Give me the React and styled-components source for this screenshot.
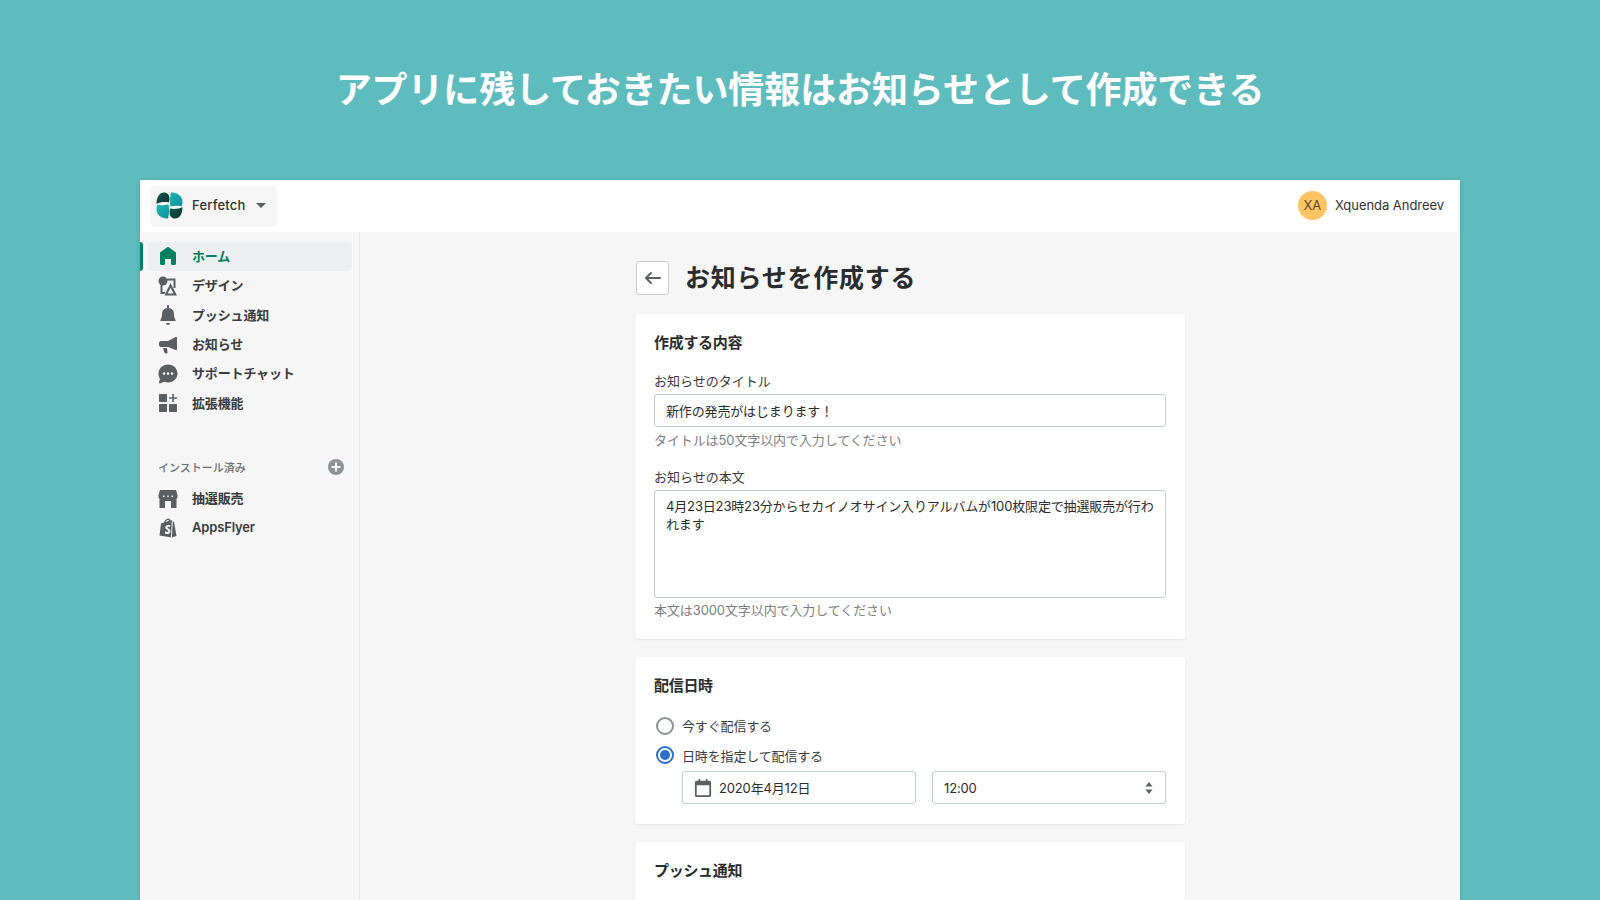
import React from 'react'
import styled, { createGlobalStyle } from 'styled-components'

const FONT = `Inter, "Noto Sans CJK JP", "Noto Sans", sans-serif`

const GlobalStyle = createGlobalStyle`
  html, body { margin: 0; height: 100%; }
  body {
    background: #5fbcbe;
    font-family: ${FONT};
    overflow: hidden;
    color: #202223;
  }
  * { box-sizing: border-box; }
`

const Page = styled.div`
  width: 1600px;
  height: 900px;
  display: flex;
  flex-direction: column;
  overflow: hidden;
`

const Banner = styled.h1`
  margin: 0;
  height: 180px;
  flex: none;
  padding-bottom: 6px;
  display: flex;
  align-items: center;
  justify-content: center;
  color: #fff;
  font-size: 36px;
  font-weight: 700;
  letter-spacing: -0.1px;
`

const Window = styled.div`
  flex: 1;
  min-height: 0;
  margin: 0 140px;
  display: flex;
  flex-direction: column;
  background: #f6f6f6;
  box-shadow: 0 0 6px rgba(0, 0, 0, 0.12);
`

const TopBar = styled.header`
  height: 52px;
  flex: none;
  background: #fff;
  display: flex;
  align-items: center;
  justify-content: space-between;
  padding: 0 16px 0 11px;
`

const Brand = styled.div`
  width: 126px;
  height: 41px;
  border-radius: 4px;
  background: #f6f6f7;
  display: flex;
  align-items: center;
  padding: 0 0 2px 5px;
  font-size: 13px;
  font-weight: 500;
  letter-spacing: 0.2px;
  color: #333;
`

const BrandName = styled.span`
  margin: 0 10px 0 9px;
`

const Caret = styled.span`
  width: 0;
  height: 0;
  border-left: 5px solid transparent;
  border-right: 5px solid transparent;
  border-top: 5px solid #5c5f62;
`

const User = styled.div`
  display: flex;
  align-items: center;
  gap: 8px;
  margin-bottom: 2px;
  font-size: 13px;
  letter-spacing: -0.05px;
  color: #333;
`

const Avatar = styled.div`
  width: 29px;
  height: 29px;
  border-radius: 50%;
  background: #ffc565;
  display: flex;
  align-items: center;
  justify-content: center;
  font-size: 13px;
  color: #5c4a26;
`

const Body = styled.div`
  flex: 1;
  min-height: 0;
  display: flex;
`

const Sidebar = styled.nav`
  width: 220px;
  flex: none;
  border-right: 1px solid #e6e6e6;
  padding-top: 9.7px;
`

const NavItem = styled.div`
  position: relative;
  height: 29.4px;
  margin: 0 7px 0 8px;
  padding-left: 10px;
  display: flex;
  align-items: center;
  gap: 14px;
  border-radius: 3px;
  font-size: 13px;
  font-weight: 600;
  letter-spacing: -0.15px;
  color: ${p => (p.$active ? '#008060' : '#3a3c3e')};
  background: ${p => (p.$active ? '#edeeef' : 'transparent')};
  svg { flex: none; fill: ${p => (p.$active ? '#008060' : '#5c5f62')}; }
  ${p =>
    p.$active &&
    `&::before {
      content: '';
      position: absolute;
      left: -8px;
      top: 0;
      bottom: 0;
      width: 3px;
      border-radius: 0 3px 3px 0;
      background: #008060;
    }`}
`

const NavLabel = styled.span`
  margin-bottom: 2px;
`

const SectionHead = styled.div`
  margin: 37px 15px 5px 18px;
  height: 24px;
  display: flex;
  align-items: center;
  justify-content: space-between;
  font-size: 11px;
  font-weight: 500;
  color: #6d7175;
`

const Main = styled.main`
  flex: 1;
  min-width: 0;
  display: flex;
  justify-content: center;
  overflow: hidden;
`

const Column = styled.div`
  width: 550px;
  padding-top: 29px;
  flex: none;
`

const TitleRow = styled.div`
  display: flex;
  align-items: center;
  gap: 16px;
  margin: 0 0 19px 1px;
`

const BackButton = styled.button`
  width: 33px;
  height: 34px;
  padding: 0;
  display: flex;
  align-items: center;
  justify-content: center;
  background: #fff;
  border: 1px solid #c9cccf;
  border-radius: 3px;
  svg { fill: #5c5f62; }
`

const PageTitle = styled.h2`
  margin: 1px 0 0;
  font-size: 25px;
  line-height: 31px;
  font-weight: 700;
  letter-spacing: 0.75px;
  color: #2b2c2d;
`

const Card = styled.section`
  background: #fff;
  border-radius: 3px;
  box-shadow: 0 1px 2px rgba(0, 0, 0, 0.07);
  padding: 18px 18px 20px 19px;
  margin-bottom: 18px;
`

const CardTitle = styled.h3`
  margin: 0 0 18px;
  font-size: 15px;
  font-weight: 700;
  line-height: 22px;
  letter-spacing: -0.3px;
  color: #2b2c2d;
`

const Label = styled.div`
  font-size: 13px;
  line-height: 18px;
  margin-bottom: 4px;
  color: #3a3c3e;
`

const inputBase = `
  display: block;
  border: 1px solid #c4cdd5;
  border-radius: 3px;
  background: #fff;
  font-family: ${FONT};
  font-size: 13px;
  letter-spacing: -0.15px;
  color: #2b2c2d;
  outline: none;
`

const TextInput = styled.input`
  ${inputBase}
  width: 512px;
  height: 33px;
  padding: 0 11px;
`

const TextArea = styled.textarea`
  ${inputBase}
  width: 512px;
  height: 108px;
  padding: 6px 11px;
  line-height: 18.4px;
  resize: none;
`

const Help = styled.div`
  font-size: 13px;
  line-height: 18px;
  letter-spacing: -0.1px;
  margin: ${p => (p.$last ? '3px 0 0' : '4px 0 19px')};
  color: #7b7f83;
`

const RadioGroup = styled.div`
  margin-top: -4px;
`

const RadioRow = styled.label`
  height: 29.5px;
  display: flex;
  align-items: center;
  gap: 8px;
  margin-left: 2px;
  font-size: 13px;
  letter-spacing: -0.15px;
  color: #3a3c3e;
`

const RadioDot = styled.span`
  width: 18px;
  height: 18px;
  border-radius: 50%;
  background: #fff;
  border: 2px solid ${p => (p.$checked ? '#2c6ecb' : '#8c9196')};
  display: flex;
  align-items: center;
  justify-content: center;
  ${p =>
    p.$checked &&
    `&::after {
      content: '';
      width: 10px;
      height: 10px;
      border-radius: 50%;
      background: #2c6ecb;
    }`}
`

const PickerRow = styled.div`
  display: flex;
  gap: 16px;
  margin: 1px 0 0 28px;
`

const Picker = styled.div`
  ${inputBase}
  width: 234px;
  height: 33px;
  padding: 0 10px 0 11px;
  display: flex;
  align-items: center;
  gap: 7px;
  svg { flex: none; fill: #5c5f62; }
`

const PickerValue = styled.span`
  flex: 1;
`

const Home = () => (
  <svg width="20" height="20" viewBox="0 0 20 20"><path d="M18 7.261V17.5c0 .841-.672 1.5-1.5 1.5h-2c-.828 0-1.5-.659-1.5-1.5V13H7v4.477C7 18.318 6.328 19 5.5 19h-2c-.828 0-1.5-.682-1.5-1.523V7.261a1.5 1.5 0 0 1 .615-1.21l6.59-4.82a1.481 1.481 0 0 1 1.59 0l6.59 4.82A1.5 1.5 0 0 1 18 7.26z" /></svg>
)

const Design = () => (
  <svg width="20" height="20" viewBox="0 0 20 20">
    <circle cx="5" cy="5" r="4.5" />
    <path d="M2.500 9h2v7h3l-1 2H2.500V9zM9 2.500h8.500V12h-2V4.500H9v-2z" />
    <path fillRule="evenodd" d="M12.500 7 19 19.500H6.500L12.500 7zm0 4.800-2.800 5.700h5.800l-3-5.700z" />
  </svg>
)

const Bell = () => (
  <svg width="20" height="20" viewBox="0 0 20 20"><path d="M10 0a1 1 0 0 1 1 1v2.032l-.001.021-.002.03A6.002 6.002 0 0 1 16 9c0 3.093.625 4.312 1.599 6.21l.034.068c.17.33-.07.722-.442.722H2.809a.496.496 0 0 1-.442-.722l.034-.068C3.375 13.312 4 12.093 4 9a6.002 6.002 0 0 1 5.003-5.918l-.002-.04L9 3V1a1 1 0 0 1 1-1zM12 18a2 2 0 0 1-4 0h4z" /></svg>
)

const Megaphone = () => (
  <svg width="20" height="20" viewBox="0 0 20 20">
    <path d="M19 2v13h-1.500L10 12H3a2 2 0 0 1-2-2V8a2 2 0 0 1 2-2h7l7.500-4H19z" />
    <path d="M5 13h4l.5 4.500c0 .5-.5 1-1 1H7.500c-.5 0-.8-.3-1-.8L5 13z" />
  </svg>
)

const Chat = () => (
  <svg width="20" height="20" viewBox="0 0 20 20">
    <path fillRule="evenodd" d="M10 0.500c5.200 0 9.500 3.900 9.500 9s-4.300 9-9.500 9c-1.300 0-2.600-.3-3.800-.8L2 19.500c-.6.200-1.100-.3-1-.9l.9-3.900C1 13.200.5 11.400.5 9.500c0-5.100 4.300-9 9.500-9zM6 8.300a1.300 1.300 0 1 0 0 2.600 1.300 1.300 0 0 0 0-2.600zm4 0a1.300 1.300 0 1 0 0 2.600 1.300 1.300 0 0 0 0-2.600zm4 0a1.300 1.300 0 1 0 0 2.600 1.300 1.300 0 0 0 0-2.600z" />
  </svg>
)

const Apps = () => (
  <svg width="20" height="20" viewBox="0 0 20 20">
    <path d="M2 1h6c.6 0 1 .4 1 1v6c0 .6-.4 1-1 1H2c-.6 0-1-.4-1-1V2c0-.6.4-1 1-1zM2 11h6c.6 0 1 .4 1 1v6c0 .6-.4 1-1 1H2c-.6 0-1-.4-1-1v-6c0-.6.4-1 1-1zM12 11h6c.6 0 1 .4 1 1v6c0 .6-.4 1-1 1h-6c-.6 0-1-.4-1-1v-6c0-.6.4-1 1-1zM14.200 1h1.600v3.200H19v1.600h-3.200V9h-1.600V5.800H11V4.200h3.200V1z" />
  </svg>
)

const Store = () => (
  <svg width="20" height="20" viewBox="0 0 20 20">
    <path d="M2 1h16l1.500 5v2c0 .8-.5 1.500-1 1.800V19h-5.500v-7H7v7H1.500V9.800C1 9.500.5 8.800.5 8V6L2 1z" />
    <path d="M5 6.500h1.500v1.500H5zM9.250 6.500h1.500v1.500h-1.500zM13.500 6.500H15v1.500h-1.500z" fill="#f6f6f6" />
  </svg>
)

const Bag = () => (
  <svg width="20" height="20" viewBox="0 0 20 20">
    <path fillRule="evenodd" d="M10.500.500c1 0 1.700.9 2 2l1.200-.3.800 1.300 1.500.2L18.500 18l-5 1.500L1.500 17.500 3 5.500l3-1C6.500 2.500 8.500.500 10.500.500zM10.800 7c-2-.3-3.500 1-3.500 2.600 0 2 3 2.300 3 3.400 0 .6-.6.900-1.100.9-.9 0-1.900-.6-1.900-.6l-.5 1.900s1 .8 2.400.8c1.700 0 3.200-1.200 3.200-3.100 0-2.300-3-2.600-3-3.500 0-.4.400-.7 1-.7.600 0 1.400.3 1.400.3l.5-1.700s-.6-.3-1.500-.3zM10.300 1.700C9 1.800 8 3 7.600 4.100l3.300-1c-.1-.6-.3-1.400-.6-1.400z" />
    <path d="M14.300 3.500 13.400 19.500" stroke="#f6f6f6" strokeWidth="1" fill="none" />
  </svg>
)

const PlusCircle = () => (
  <svg width="16" height="16" viewBox="0 0 16 16">
    <circle cx="8" cy="8" r="8" fill="#8c9196" />
    <path d="M7 3.500h2V7h3.500v2H9v3.500H7V9H3.500V7H7z" fill="#f6f6f6" />
  </svg>
)

const ArrowLeft = () => (
  <svg width="20" height="20" viewBox="0 0 20 20"><path d="M17 9H5.414l3.293-3.293a.999.999 0 1 0-1.414-1.414l-5 5a.999.999 0 0 0 0 1.414l5 5a.997.997 0 0 0 1.414 0 .999.999 0 0 0 0-1.414L5.414 11H17a1 1 0 1 0 0-2z" /></svg>
)

const CalendarIcon = () => (
  <svg width="18" height="18" viewBox="0 0 20 20">
    <path fillRule="evenodd" d="M5 0h2v2h6V0h2v2h2c1.100 0 2 .9 2 2v14c0 1.100-.9 2-2 2H3c-1.100 0-2-.9-2-2V4c0-1.100.9-2 2-2h2V0zM3 7v11h14V7H3z" />
  </svg>
)

const UpDown = () => (
  <svg width="12" height="14" viewBox="0 0 12 14"><path d="M6 1l3.500 4.500h-7zM6 13 2.500 8.500h7z" /></svg>
)

const Logo = () => (
  <svg width="27" height="27" viewBox="0 0 27 27">
    <defs>
      <linearGradient id="dark" x1="0" y1="0" x2="1" y2="1">
        <stop offset="0" stopColor="#0f5a50" />
        <stop offset="1" stopColor="#12302c" />
      </linearGradient>
      <linearGradient id="teal" x1="0" y1="0" x2="1" y2="1">
        <stop offset="0" stopColor="#1fb4bb" />
        <stop offset="1" stopColor="#0e8f98" />
      </linearGradient>
    </defs>
    <path d="M.5 12C.5 5 3.500 .5 8 .5c3.500 0 5.500 2.500 5.500 6 0 1.500-.3 3-.8 4C10 9.800 4 9.800 .5 12z" fill="url(#dark)" />
    <path d="M15 .5C21 0 26.500 4 26.500 10c0 1.500-.3 3-1 4.500C23 13 18 14 14.500 14.500c-1-4-.5-10 .5-14z" fill="url(#teal)" />
    <path d="M12 26.500C6 27 .5 23 .5 17c0-1.500.3-3 1-4.500C4 14 9 13 12.500 12.500c1 4 .5 10-.5 14z" fill="url(#teal)" />
    <path d="M26.500 15C26.500 22 23.500 26.500 19 26.500c-3.500 0-5.500-2.500-5.500-6 0-1.500.3-3 .8-4C17 17.200 23 17.200 26.500 15z" fill="url(#dark)" />
  </svg>
)

const NAV = [
  { icon: <Home />, label: 'ホーム', active: true },
  { icon: <Design />, label: 'デザイン' },
  { icon: <Bell />, label: 'プッシュ通知' },
  { icon: <Megaphone />, label: 'お知らせ' },
  { icon: <Chat />, label: 'サポートチャット' },
  { icon: <Apps />, label: '拡張機能' },
]

const INSTALLED = [
  { icon: <Store />, label: '抽選販売' },
  { icon: <Bag />, label: 'AppsFlyer' },
]

const App = () => (
  <Page>
    <GlobalStyle />
    <Banner>アプリに残しておきたい情報はお知らせとして作成できる</Banner>
    <Window>
      <TopBar>
        <Brand>
          <Logo />
          <BrandName>Ferfetch</BrandName>
          <Caret />
        </Brand>
        <User>
          <Avatar>XA</Avatar>
          Xquenda Andreev
        </User>
      </TopBar>
      <Body>
        <Sidebar>
          {NAV.map(item => (
            <NavItem key={item.label} $active={item.active}>
              {item.icon}
              <NavLabel>{item.label}</NavLabel>
            </NavItem>
          ))}
          <SectionHead>
            インストール済み
            <PlusCircle />
          </SectionHead>
          {INSTALLED.map(item => (
            <NavItem key={item.label}>
              {item.icon}
              <NavLabel>{item.label}</NavLabel>
            </NavItem>
          ))}
        </Sidebar>
        <Main>
          <Column>
            <TitleRow>
              <BackButton aria-label="戻る"><ArrowLeft /></BackButton>
              <PageTitle>お知らせを作成する</PageTitle>
            </TitleRow>
            <Card>
              <CardTitle>作成する内容</CardTitle>
              <Label>お知らせのタイトル</Label>
              <TextInput readOnly defaultValue="新作の発売がはじまります！" />
              <Help>タイトルは50文字以内で入力してください</Help>
              <Label>お知らせの本文</Label>
              <TextArea readOnly defaultValue="4月23日23時23分からセカイノオサイン入りアルバムが100枚限定で抽選販売が行われます" />
              <Help $last>本文は3000文字以内で入力してください</Help>
            </Card>
            <Card>
              <CardTitle>配信日時</CardTitle>
              <RadioGroup>
                <RadioRow><RadioDot />今すぐ配信する</RadioRow>
                <RadioRow><RadioDot $checked />日時を指定して配信する</RadioRow>
              </RadioGroup>
              <PickerRow>
                <Picker>
                  <CalendarIcon />
                  <PickerValue>2020年4月12日</PickerValue>
                </Picker>
                <Picker>
                  <PickerValue>12:00</PickerValue>
                  <UpDown />
                </Picker>
              </PickerRow>
            </Card>
            <Card>
              <CardTitle>プッシュ通知</CardTitle>
            </Card>
          </Column>
        </Main>
      </Body>
    </Window>
  </Page>
)

export default App
